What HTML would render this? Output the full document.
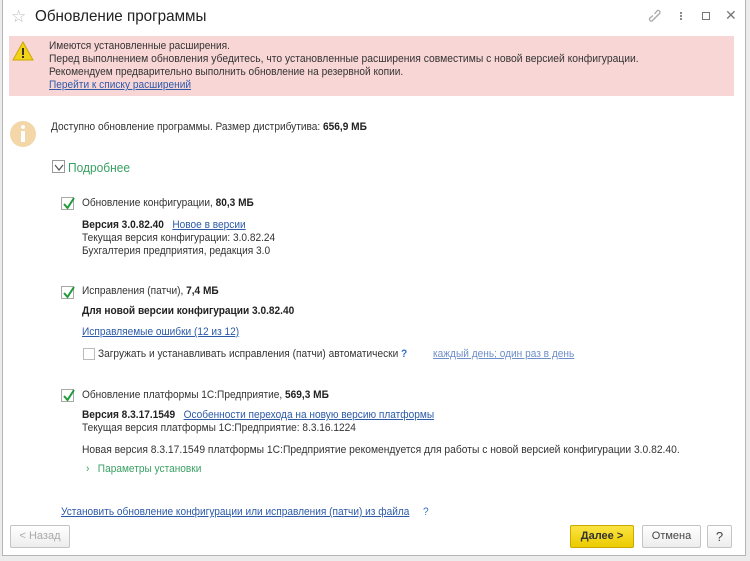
<!DOCTYPE html>
<html><head><meta charset="utf-8">
<style>
*{margin:0;padding:0;box-sizing:border-box}
body{width:750px;height:561px;background:#ececec;position:relative;overflow:hidden;font-family:"Liberation Sans",Arial,sans-serif;font-size:11px;color:#333}
#win{position:absolute;left:2px;top:0;width:744px;height:556px;background:#fff;border:1px solid #b5b5b5;border-top:none}
.a{position:absolute;white-space:nowrap;line-height:13px;transform:scaleX(.92);transform-origin:left}
.lnk{color:#2c5aa8;text-decoration:underline}
.cb{position:absolute;width:13px;height:13px;border:1px solid #a8a8a8;background:#fff}
.cb svg{position:absolute;left:0;top:-2px}
.btn{position:absolute;height:23px;border:1px solid #c4c4c4;border-radius:2px;background:linear-gradient(#fff,#ededed);text-align:center;line-height:21px;font-size:11px;color:#444}
b{color:#222}
</style></head><body>
<div id="win"></div>
<div class="a" style="left:11px;top:8px;font-size:17px;line-height:18px;color:#bbb;transform:none">☆</div>
<div class="a" style="left:35px;top:8px;font-size:16px;line-height:18px;color:#222;transform:scaleX(.95)">Обновление программы</div>
<svg style="position:absolute;left:648px;top:9px" width="16" height="16" viewBox="0 0 16 16"><g fill="none" stroke="#aaa" stroke-width="1.3"><path d="M7 9 L4 12 a2 2 0 0 1 -2.5 -2.5 L5 6.5"/><path d="M9 7 L12 4 a2 2 0 0 0 -2.5 -2.5 L6.5 5"/><path d="M6 10 L10 6"/></g></svg>
<div style="position:absolute;left:680px;top:12px;width:2px;height:2px;background:#888;box-shadow:0 3px #888,0 6px #888"></div>
<div style="position:absolute;left:702px;top:12px;width:8px;height:8px;border:1.5px solid #777"></div>
<div class="a" style="left:725px;top:9px;font-size:14px;color:#777;transform:none">✕</div>

<div style="position:absolute;left:9px;top:36px;width:725px;height:60px;background:#f9d6d6"></div>
<svg style="position:absolute;left:12px;top:41px" width="22" height="20" viewBox="0 0 22 20"><path d="M11 1 L21 19 L1 19 Z" fill="#f3d21a" stroke="#c9a800" stroke-width="1"/><rect x="10" y="7" width="2" height="7" fill="#333"/><rect x="10" y="15" width="2" height="2" fill="#333"/></svg>
<div class="a" style="left:49px;top:40px">Имеются установленные расширения.</div>
<div class="a" style="left:49px;top:53px;transform:scaleX(.94)">Перед выполнением обновления убедитесь, что установленные расширения совместимы с новой версией конфигурации.</div>
<div class="a" style="left:49px;top:66px">Рекомендуем предварительно выполнить обновление на резервной копии.</div>
<div class="a lnk" style="left:49px;top:79px">Перейти к списку расширений</div>

<div style="position:absolute;left:10px;top:121px;width:26px;height:26px;border-radius:50%;background:#f3d7a8"></div>
<div style="position:absolute;left:21px;top:125px;width:4px;height:4px;border-radius:50%;background:#fff"></div>
<div style="position:absolute;left:21px;top:131px;width:4px;height:11px;background:#fff"></div>
<div class="a" style="left:51px;top:121px">Доступно обновление программы. Размер дистрибутива: <b>656,9 МБ</b></div>

<div class="cb" style="left:52px;top:160px;border-color:#999"><svg width="13" height="13" style="top:0"><path d="M2 4 L6 9 L10 4" fill="none" stroke="#555" stroke-width="1.2"/></svg></div>
<div class="a" style="left:68px;top:160px;font-size:13px;line-height:15px;color:#3aa064">Подробнее</div>

<div class="cb" style="left:61px;top:197px"><svg width="14" height="14"><path d="M2 8 L5.5 12 L12 2" fill="none" stroke="#1f9a3a" stroke-width="2"/></svg></div>
<div class="a" style="left:82px;top:197px">Обновление конфигурации, <b>80,3 МБ</b></div>
<div class="a" style="left:82px;top:219px"><b>Версия 3.0.82.40</b>&nbsp;&nbsp; <span class="lnk">Новое в версии</span></div>
<div class="a" style="left:82px;top:232px">Текущая версия конфигурации: 3.0.82.24</div>
<div class="a" style="left:82px;top:245px">Бухгалтерия предприятия, редакция 3.0</div>

<div class="cb" style="left:61px;top:286px"><svg width="14" height="14"><path d="M2 8 L5.5 12 L12 2" fill="none" stroke="#1f9a3a" stroke-width="2"/></svg></div>
<div class="a" style="left:82px;top:285px">Исправления (патчи), <b>7,4 МБ</b></div>
<div class="a" style="left:82px;top:305px"><b>Для новой версии конфигурации 3.0.82.40</b></div>
<div class="a lnk" style="left:82px;top:326px">Исправляемые ошибки (12 из 12)</div>
<div class="cb" style="left:83px;top:348px;width:12px;height:12px;border-color:#bbb"></div>
<div class="a" style="left:98px;top:348px">Загружать и устанавливать исправления (патчи) автоматически <span style="color:#3a6fc4;font-weight:bold">?</span></div>
<div class="a lnk" style="left:433px;top:348px;color:#6d8ec8">каждый день; один раз в день</div>

<div class="cb" style="left:61px;top:389px"><svg width="14" height="14"><path d="M2 8 L5.5 12 L12 2" fill="none" stroke="#1f9a3a" stroke-width="2"/></svg></div>
<div class="a" style="left:82px;top:389px">Обновление платформы 1С:Предприятие, <b>569,3 МБ</b></div>
<div class="a" style="left:82px;top:409px"><b>Версия 8.3.17.1549</b>&nbsp;&nbsp; <span class="lnk">Особенности перехода на новую версию платформы</span></div>
<div class="a" style="left:82px;top:422px">Текущая версия платформы 1С:Предприятие: 8.3.16.1224</div>
<div class="a" style="left:82px;top:444px;transform:scaleX(.935)">Новая версия 8.3.17.1549 платформы 1С:Предприятие рекомендуется для работы с новой версией конфигурации 3.0.82.40.</div>
<div class="a" style="left:86px;top:463px;color:#3aa064">›&nbsp;&nbsp; Параметры установки</div>

<div class="a lnk" style="left:61px;top:506px">Установить обновление конфигурации или исправления (патчи) из файла</div>
<div class="a" style="left:423px;top:506px;color:#3a6fc4">?</div>

<div class="btn" style="left:10px;top:525px;width:60px;color:#aaa">&lt; Назад</div>
<div class="btn" style="left:570px;top:525px;width:64px;background:linear-gradient(#fbe443,#eccb00);border-color:#c9a800;color:#333;font-weight:bold">Далее &gt;</div>
<div class="btn" style="left:642px;top:525px;width:59px">Отмена</div>
<div class="btn" style="left:707px;top:525px;width:25px;font-size:13px">?</div>
</body></html>
